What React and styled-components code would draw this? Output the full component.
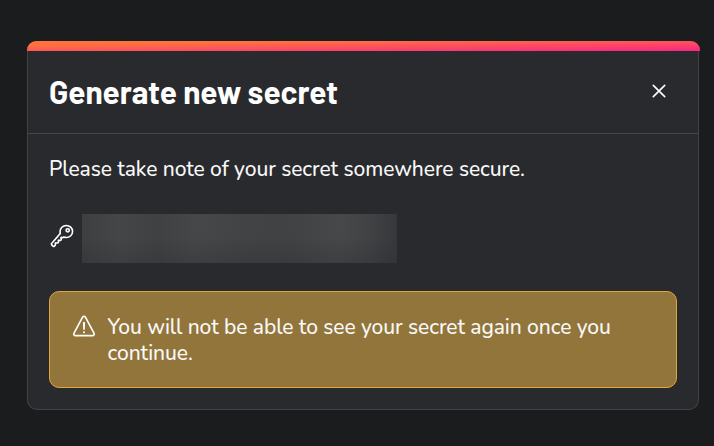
import React from "react";
import styled, { createGlobalStyle } from "styled-components";
import { IoCloseOutline, IoKeyOutline, IoWarningOutline } from "react-icons/io5";

const GlobalStyle = createGlobalStyle`
  *, *::before, *::after { box-sizing: border-box; }
  body {
    margin: 0;
    background: #1b1c1e;
    color: #f8f8f8;
    font-family: Nunito, "Nunito Sans", "Noto Sans", sans-serif;
  }
`;

const Page = styled.main`
  height: 446px;
  padding: 41px 14px 36px 27px;
  overflow: hidden;
`;

const Dialog = styled.section`
  height: 369px;
  display: flex;
  flex-direction: column;
`;

const Accent = styled.div`
  flex: 0 0 10px;
  border-radius: 9px 9px 0 0;
  background: linear-gradient(to bottom right, #ff7240 22%, #fb2880 95%);
`;

const Panel = styled.div`
  flex: 1;
  width: 672px;
  border: 1px solid #414247;
  border-top: 0;
  border-radius: 0 0 10px 10px;
  background: #292a2e;
`;

const Header = styled.header`
  display: flex;
  align-items: center;
  justify-content: space-between;
  height: 83px;
  padding: 0 26px 2px 21px;
  border-bottom: 1px solid #45464a;
`;

const Title = styled.h1`
  margin: 0;
  color: #fff;
  font: 700 31.5px/40px Barlow, Roboto, sans-serif;
  white-space: nowrap;
`;

const CloseButton = styled.button`
  display: flex;
  padding: 0;
  border: 0;
  background: none;
  color: #fff;
  font-size: 26px;
`;

const Body = styled.div`
  padding: 22px 21px 21px;
`;

const Copy = styled.p`
  margin: 0;
  font-size: 21px;
  font-weight: 500;
  line-height: 26px;
  letter-spacing: -0.08px;
  white-space: nowrap;
`;

const SecretRow = styled.div`
  display: flex;
  align-items: flex-start;
  gap: 7px;
  height: 49px;
  margin: 32px 0 28px;
`;

const RowIcon = styled.span`
  display: flex;
  flex: none;
  padding-top: ${({ $offset }) => $offset};
  color: #fff;
  font-size: 26px;
`;

const MaskedSecret = styled.div`
  width: 315px;
  height: 49px;
  background:
    linear-gradient(transparent 45%, rgba(41, 42, 46, 0.3)),
    linear-gradient(90deg, #3e3f41, #454648 12%, #404143 24%, #464749 37%, #424345 52%, #414244 65%, #474849 82%, #424345 90%, #37383b);
`;

const Alert = styled.div`
  display: flex;
  align-items: flex-start;
  gap: 10.5px;
  height: 97px;
  padding: 21px;
  border: 1px solid #e0a53c;
  border-radius: 10px;
  background: #92753a;

  ${Copy} {
    padding-top: 1px;
  }
`;

export default function App() {
  return (
    <>
      <GlobalStyle />
      <Page>
        <Dialog role="dialog" aria-labelledby="dialog-title">
          <Accent />
          <Panel>
            <Header>
              <Title id="dialog-title">Generate new secret</Title>
              <CloseButton aria-label="Close"><IoCloseOutline /></CloseButton>
            </Header>
            <Body>
              <Copy>Please take note of your secret somewhere secure.</Copy>
              <SecretRow>
                <RowIcon $offset="9px"><IoKeyOutline /></RowIcon>
                <MaskedSecret />
              </SecretRow>
              <Alert>
                <RowIcon $offset="0"><IoWarningOutline /></RowIcon>
                <Copy>
                  You will not be able to see your secret again once you<br />continue.
                </Copy>
              </Alert>
            </Body>
          </Panel>
        </Dialog>
      </Page>
    </>
  );
}
